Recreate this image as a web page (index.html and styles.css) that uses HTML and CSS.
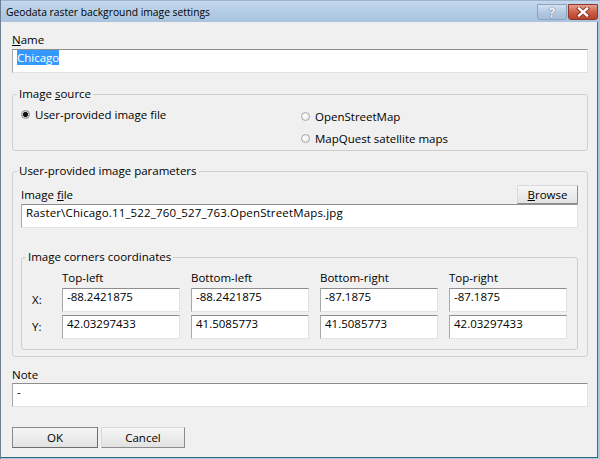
FILE: index.html
```html
<!DOCTYPE html>
<html>
<head>
<meta charset="utf-8">
<link rel="stylesheet" href="styles.css">
</head>
<body>
<div class="window">
  <div class="titlebar">
    <span class="title">Geodata raster background image settings</span>
    <div class="caption">
      <div class="cbtn help">?</div>
      <div class="cbtn close">
        <svg width="14" height="10" viewBox="0 0 14 10">
          <path d="M3 1.5 L11 8.5 M11 1.5 L3 8.5" stroke="#7a2a20" stroke-width="4" stroke-linecap="square"/>
          <path d="M3 1.5 L11 8.5 M11 1.5 L3 8.5" stroke="#ffffff" stroke-width="2.4" stroke-linecap="square"/>
        </svg>
      </div>
    </div>
  </div>
  <div class="client">
    <div class="label name-label"><u>N</u>ame</div>
    <div class="field"><span class="sel">Chicago</span></div>

    <fieldset class="group source">
      <legend>Image <u>s</u>ource</legend>
      <div class="source-body">
        <div class="radio-col">
          <div class="radio-row"><span class="radio checked"></span>User-provided image file</div>
        </div>
        <div class="radio-col right">
          <div class="radio-row"><span class="radio"></span>OpenStreetMap</div>
          <div class="radio-row"><span class="radio"></span>MapQuest satellite maps</div>
        </div>
      </div>
    </fieldset>

    <fieldset class="group params">
      <legend>User-provided image parameters</legend>
      <div class="params-body">
        <div class="file-row">
          <div class="label">Image <u>f</u>ile</div>
          <div class="btn browse"><u>B</u>rowse</div>
        </div>
        <div class="field wide">Raster\Chicago.11_522_760_527_763.OpenStreetMaps.jpg</div>

        <fieldset class="group corners">
          <legend>Image corners coordinates</legend>
          <div class="coords">
            <div></div>
            <div class="head">Top-left</div>
            <div class="head">Bottom-left</div>
            <div class="head">Bottom-right</div>
            <div class="head">Top-right</div>

            <div class="axis">X:</div>
            <div class="field">-88.2421875</div>
            <div class="field">-88.2421875</div>
            <div class="field">-87.1875</div>
            <div class="field">-87.1875</div>

            <div class="axis">Y:</div>
            <div class="field">42.03297433</div>
            <div class="field">41.5085773</div>
            <div class="field">41.5085773</div>
            <div class="field">42.03297433</div>
          </div>
        </fieldset>
      </div>
    </fieldset>

    <div class="label note-label">Note</div>
    <div class="field">-</div>

    <div class="footer">
      <div class="btn default ok">OK</div>
      <div class="btn cancel">Cancel</div>
    </div>
  </div>
</div>
</body>
</html>
```
FILE: styles.css
```css
* { box-sizing: border-box; }
html, body { margin: 0; padding: 0; }
body {
  font-family: "Open Sans", "Noto Sans", sans-serif;
  font-size: 11.5px;
  line-height: 16px;
  color: #000;
  background: #a9c9e0;
}
.window {
  width: 600px;
  height: 459px;
  display: flex;
  flex-direction: column;
  background: #a9c9e0;
  border-left: 1px solid #6f7f90;
}
.titlebar {
  height: 22px;
  flex: none;
  display: flex;
  align-items: center;
  padding-left: 5px;
  background: linear-gradient(#c4d8ed, #b2cbe5 60%, #a9c3df);
  border-top: 1px solid #9fb4cc;
}
.title {
  color: #000;
  font-size: 10.3px;
  padding-top: 1px;
}
.caption {
  margin-left: auto;
  margin-right: 2px;
  align-self: flex-start;
  margin-top: 3px;
  display: flex;
  gap: 1px;
}
.cbtn {
  width: 30px;
  height: 16px;
  border-radius: 0 0 3px 3px;
  display: flex;
  align-items: center;
  justify-content: center;
}
.help {
  background: linear-gradient(#d3e1f0, #b5cae2 50%, #a4bcd8);
  border: 1px solid #8aa2bf;
  color: #f4f8fc;
  font-weight: bold;
  font-size: 13px;
  text-shadow: 0 0 1px #56708f, 0 0 1px #56708f;
}
.close {
  background: linear-gradient(#e3a08f, #cf5f48 50%, #b8402b);
  border: 1px solid #8e3627;
}
.client {
  flex: 1;
  background: #f0f0f0;
  margin: 0 2px 1px 0;
  border-right: 1px solid #3f6f84;
  border-bottom: 1px solid #2f6a7a;
  padding: 10px 9px 0 11px;
}
.label { height: 16px; }
.name-label { margin-bottom: 1px; }
.field {
  height: 24px;
  background: #fff;
  border: 1px solid;
  border-color: #8e8e8e #e2e2e2 #e2e2e2 #a8a8a8;
  padding: 0 4px;
  white-space: nowrap;
  overflow: hidden;
}
.field.wide { letter-spacing: 0.15px; }
.sel {
  background: #3399ff;
  color: #fff;
}
.group {
  margin: 0;
  padding: 0;
  border: 1px solid #cfcfcf;
  border-radius: 3px;
  min-width: 0;
}
.group legend {
  padding: 0 2px;
  margin-left: 4px;
  line-height: 16px;
}
.source { margin-top: 13px; }
.source-body {
  display: grid;
  grid-template-columns: 280px 1fr;
  padding: 5px 0 3px 8px;
}
.radio-col { display: flex; flex-direction: column; gap: 6px; }
.radio-col.right { margin-top: 2px; }
.radio-row {
  display: flex;
  align-items: center;
  gap: 5px;
  height: 16px;
}
.radio {
  width: 9px;
  height: 9px;
  border-radius: 50%;
  border: 1px solid #a8a8a8;
  background: radial-gradient(circle at 40% 40%, #ffffff, #e2e2e2);
  flex: none;
  position: relative;
  top: -1px;
}
.radio.checked {
  border-color: #8c8c8c;
  background: radial-gradient(circle, #111 0 2.2px, #bdbdbd 2.6px, #e8e8e8 4px);
}
.params { margin-top: 12px; }
.params-body { padding: 6px 9px 6px 8px; }
.file-row {
  display: flex;
  align-items: flex-end;
  justify-content: space-between;
  height: 19px;
}
.file-row .label { padding-bottom: 1px; height: 17px; }
.btn {
  display: flex;
  align-items: center;
  justify-content: center;
  background: linear-gradient(#f6f6f6, #ececec 50%, #e2e2e2);
  border: 1px solid;
  border-color: #dadada #8c8c8c #8c8c8c #dadada;
}
.browse { width: 61px; height: 19px; }
.corners { margin-top: 21px; }
.coords {
  display: grid;
  grid-template-columns: 19px repeat(4, 118px);
  grid-template-rows: 18px 24px 27px;
  column-gap: 11px;
  padding: 5px 0 10px 10px;
}
.coords .head { margin-bottom: 2px; }
.coords .field:nth-child(n+12) { margin-top: 3px; }
.coords .axis:nth-child(11) { padding-top: 3px; }
.axis { display: flex; align-items: center; }
.note-label { margin-top: 10px; }
.footer {
  display: flex;
  gap: 3px;
  margin-top: 20px;
}
.ok { width: 86px; height: 21px; }
.cancel { width: 84px; height: 21px; }
.default {
  border-color: #8a8a8a #6c6c6c #6c6c6c #8a8a8a;
}
```
